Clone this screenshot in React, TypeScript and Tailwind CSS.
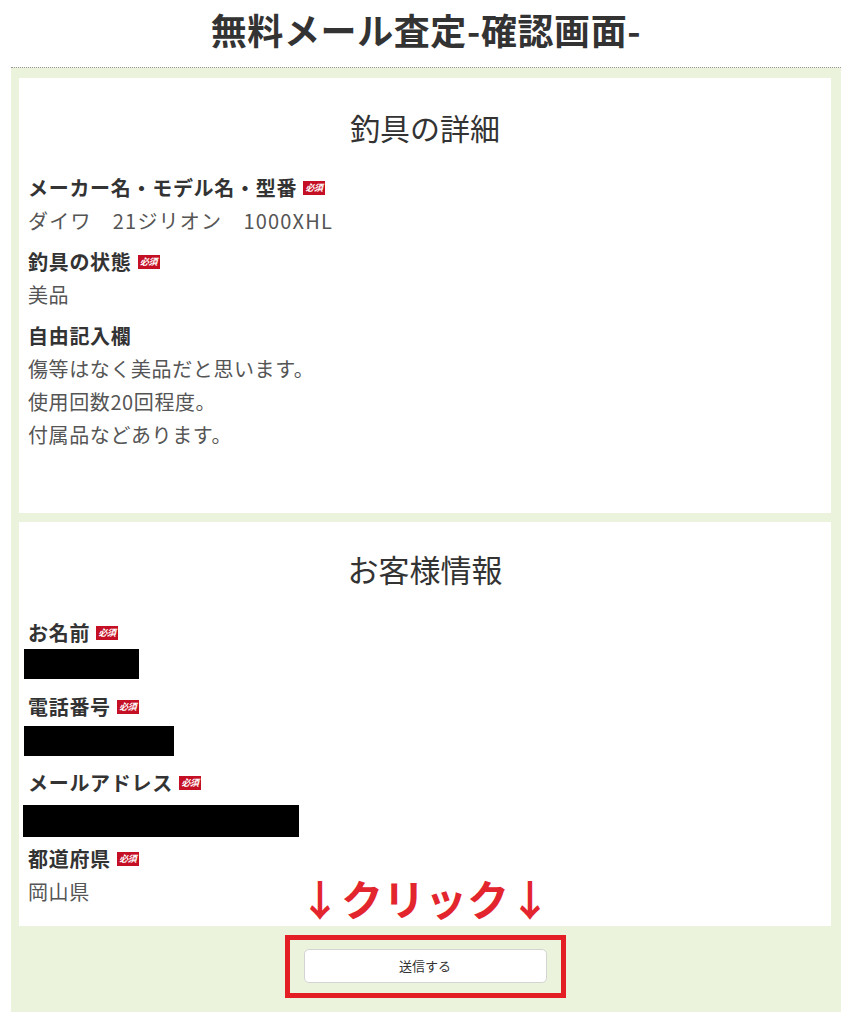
import React from "react";

const font = { fontFamily: '"Noto Sans CJK JP", "Noto Sans", sans-serif' };

function Badge() {
  return (
    <span className="ml-[6px] inline-flex h-[14px] w-[22px] items-center justify-center bg-[#c40f24] text-[9px] font-bold italic leading-none tracking-[-0.5px] text-white">
      必須
    </span>
  );
}

function Label({ children }: { children: React.ReactNode }) {
  return (
    <div className="flex items-center text-[20px] font-bold leading-[33px] tracking-[0.7px] text-[#333]">
      <span>{children}</span>
      <Badge />
    </div>
  );
}

function Value({ children, wide }: { children: React.ReactNode; wide?: boolean }) {
  return (
    <div className={wide ? "text-[20px] leading-[33px] tracking-[1.2px] text-[#555]" : "text-[20px] leading-[33px] tracking-[0.6px] text-[#555]"}>
      {children}
    </div>
  );
}

export default function App() {
  return (
    <div className="min-h-[1024px] w-full bg-white" style={font}>
      <h1 className="h-[67px] pt-[8px] text-center text-[36px] font-bold leading-[42px] tracking-[0.6px] text-[#333]">
        無料メール査定-確認画面-
      </h1>
      <div className="mx-[11px] border-t border-dotted border-[#999] bg-[#ebf3dd] pl-2 pr-[10px] pt-[10px] pb-[14px]">
        <section className="bg-white px-[9px] pt-[29px] pb-[62px]">
          <h2 className="text-center text-[30px] font-normal leading-[40px] text-[#333]">釣具の詳細</h2>
          <div className="mt-[24px]">
            <Label>メーカー名・モデル名・型番</Label>
            <Value wide>ダイワ　21ジリオン　1000XHL</Value>
          </div>
          <div className="mt-[8px]">
            <Label>釣具の状態</Label>
            <Value>美品</Value>
          </div>
          <div className="mt-[8px]">
            <div className="text-[20px] font-bold leading-[33px] tracking-[0.7px] text-[#333]">自由記入欄</div>
            <Value>
              傷等はなく美品だと思います。
              <br />
              使用回数20回程度。
              <br />
              付属品などあります。
            </Value>
          </div>
        </section>

        <section className="relative mt-[9px] bg-white px-[9px] pt-[27px] pb-[18px]">
          <h2 className="text-center text-[31px] font-normal leading-[40px] text-[#333]">お客様情報</h2>
          <div className="mt-[27px]">
            <Label>お名前</Label>
            <div className="-ml-[4px] h-[30px] w-[115px] bg-black" />
          </div>
          <div className="mt-[11px]">
            <Label>電話番号</Label>
            <div className="-ml-[4px] mt-[3px] h-[30px] w-[150px] bg-black" />
          </div>
          <div className="mt-[10px]">
            <Label>メールアドレス</Label>
            <div className="-ml-[5px] mt-[6px] h-[32px] w-[276px] bg-black" />
          </div>
          <div className="mt-[5px]">
            <Label>都道府県</Label>
            <Value>岡山県</Value>
          </div>
          <div className="absolute left-1/2 top-[351px] -translate-x-1/2 whitespace-nowrap text-[42px] font-bold leading-[50px] text-[#e3262d]">
            ↓クリック↓
          </div>
        </section>

        <div className="flex justify-center pt-[9px]">
          <div className="border-[5px] border-[#e31e24] px-[14px] pt-[9px] pb-[10px]">
            <button className="h-[34px] w-[243px] rounded-[5px] border border-[#d4d4d4] bg-white text-[13px] text-[#333]">
              送信する
            </button>
          </div>
        </div>
      </div>
    </div>
  );
}
